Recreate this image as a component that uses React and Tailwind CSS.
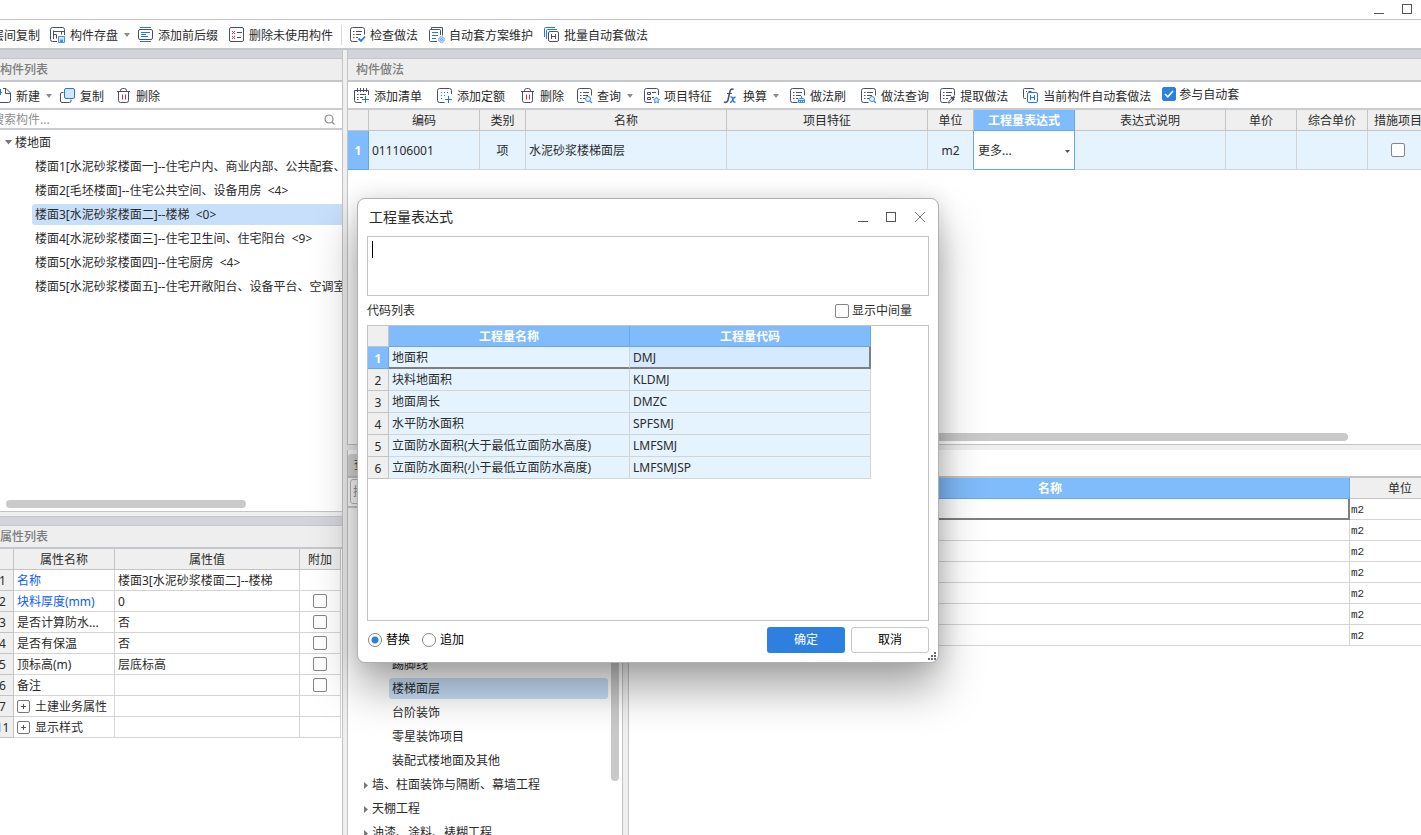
import React, { useState } from 'react';

const INK = '#4b5063';
const BLUE = '#1f7ae8';

const Svg = ({ children }) => (
  <svg width="16" height="16" viewBox="0 0 16 16" fill="none" stroke={INK} className="shrink-0" aria-hidden="true">
    {children}
  </svg>
);

// Sheet with dotted lines, open in the lower right corner
const Sheet = () => (
  <>
    <path d="M7.500 14.500h-5a2 2 0 0 1-2-2v-10a2 2 0 0 1 2-2h10a2 2 0 0 1 2 2v5" />
    <path d="M3 4.500h1.500M6 4.500h6M3 7.500h1.500M6 7.500h5M3 10.500h1.500M6 10.500h2" />
  </>
);

const SaveIcon = () => (
  <Svg>
    <path d="M7 14.500H2.500a2 2 0 0 1-2-2v-10a2 2 0 0 1 2-2h10a2 2 0 0 1 2 2V8" />
    <path d="M3.500 12V3.500M3.500 7.500h3v4M3.500 4.500h11M11.500 4.500v3" />
    <path d="M8.500 9.500h6v6h-6z" fill="#d6e8ff" stroke="#4a90e8" />
    <path d="M10 12.500h3V15h-3z" fill="#4a90e8" stroke="none" />
  </Svg>
);

const PrefixIcon = () => (
  <Svg>
    <path d="M2 .5h11M2 14.500h11" stroke={BLUE} />
    <rect x=".5" y="2.500" width="14" height="10" rx="1.500" />
    <path d="M3 5.500h9M3 7.500h5M3 9.500h7" stroke={BLUE} />
  </Svg>
);

const RemoveUnusedIcon = () => (
  <Svg>
    <rect x=".5" y=".5" width="14" height="14" rx="1.500" />
    <path d="M3 4l3 3M6 4L3 7M3 9l3 3M6 9l-3 3" stroke="#e02b3a" />
    <path d="M8 5.500h5M8 10.500h4" />
  </Svg>
);

const CheckSheetIcon = () => (
  <Svg>
    <Sheet />
    <path d="M8.500 11.500l2.500 2.500 4-4.500" stroke={BLUE} strokeWidth="1.800" />
  </Svg>
);

const SchemeIcon = () => (
  <Svg>
    <path d="M2.500 2.500v-2h11v8M8 14.500H1.500a1 1 0 0 1-1-1v-10a1 1 0 0 1 1-1h9a1 1 0 0 1 1 1V8" />
    <path d="M3 5.500h6M3 8.500h6M3 11.500h4" stroke={BLUE} />
    <circle cx="12.500" cy="12.500" r="3" fill="#b8d6fa" stroke="#6ba5ee" strokeDasharray="1.500 .8" />
    <circle cx="12.500" cy="12.500" r="1" stroke="#6ba5ee" />
  </Svg>
);

const BatchIcon = () => (
  <Svg>
    <path d="M.5 10V1.500a1 1 0 0 1 1-1H11M2.500 12V3.500a1 1 0 0 1 1-1H13" stroke={BLUE} />
    <rect x="4.500" y="4.500" width="10" height="10" rx="1.500" fill="#fff" />
    <path d="M7.500 7v5M11.500 7v5M7.500 9.500h4" />
  </Svg>
);

const NewIcon = () => (
  <Svg>
    <path d="M7 .5h3l4.500 4.500v7.500a2 2 0 0 1-2 2H2.500V8" />
    <path d="M9.500.5v5h5" />
    <path d="M1 4.500h5M4.500 1v6" stroke={BLUE} />
  </Svg>
);

const CopyIcon = () => (
  <Svg>
    <path d="M3.500 4.500H2A1.500 1.500 0 0 0 .5 6v7A1.500 1.500 0 0 0 2 14.500h7.500A1.500 1.500 0 0 0 11 13v-1.500" />
    <rect x="4.500" y=".5" width="10" height="10" rx="1.500" fill="#d3e6fd" stroke={BLUE} />
  </Svg>
);

const TrashIcon = () => (
  <Svg>
    <path d="M1 3.500h13M4.500 3.500v-1a2 2 0 0 1 2-2h2a2 2 0 0 1 2 2v1M2.500 3.500v9a2 2 0 0 0 2 2h6a2 2 0 0 0 2-2v-9" />
    <path d="M6.500 6.500v5M9.500 6.500v5" stroke="#e02b3a" />
  </Svg>
);

const AddListIcon = () => (
  <Svg>
    <path d="M7.500 14.500h-5a2 2 0 0 1-2-2v-10h14V7M3.500 0v4M6.500 0v4M9.500 0v4M12.500 0v4" />
    <path d="M3 6.500h1.500M6 6.500h6M3 9.500h1.500M6 9.500h3M3 11.500h1.500" />
    <path d="M11.500 8v7M8 11.500h7" stroke={BLUE} />
  </Svg>
);

const AddQuotaIcon = () => (
  <Svg>
    <path d="M7.500 14.500h-5a2 2 0 0 1-2-2v-10a2 2 0 0 1 2-2h10a2 2 0 0 1 2 2V6" />
    <path d="M4 4.500h8M4 7.500h5M4 10.500h3" stroke={BLUE} strokeDasharray="1 2" />
    <path d="M11.500 8v7M8 11.500h7" stroke={BLUE} />
  </Svg>
);

const QueryIcon = () => (
  <Svg>
    <Sheet />
    <circle cx="11" cy="11" r="2.500" fill="#e6f1ff" stroke="#3d8bea" />
    <path d="M13 13l2 2" stroke="#3d8bea" strokeWidth="1.500" />
  </Svg>
);

const FeatureIcon = () => (
  <Svg>
    <path d="M8 14.500H2.500a2 2 0 0 1-2-2v-10a2 2 0 0 1 2-2h10a2 2 0 0 1 2 2V7" />
    <path d="M3.500 4.500h3v2h-3zM3.500 9.500h3v2h-3zM8 4.500h4M8 9.500h2" />
    <path d="M12.500 9l1 2 2 .3-1.500 1.500.4 2.200-1.900-1-1.900 1 .4-2.200-1.500-1.500 2-.3z" fill="#d6e8ff" stroke="#4a90e8" />
  </Svg>
);

const FxIcon = () => (
  <Svg>
    <path d="M10.500 1.500C8.500.2 7.300 1.500 6.800 4L5 12c-.5 2-2 3-4 2" strokeWidth="1.600" />
    <path d="M4 5.500h5" />
    <path d="M7.500 9c2-.5 2 1 2.500 3s1 2.500 2.500 2M12.500 9c-1 0-2 1-3 3s-1.500 2.500-2.500 2" stroke={BLUE} strokeWidth="1.400" />
  </Svg>
);

const BrushIcon = () => (
  <Svg>
    <Sheet />
    <path d="M11.500 8v2.500M8.500 14.500v-3a1 1 0 0 1 1-1h4a1 1 0 0 1 1 1v3zM8.500 12.500h6M10.500 12.500v2M12.500 12.500v2" fill="#d6e8ff" stroke="#3d8bea" />
  </Svg>
);

const ExtractIcon = () => (
  <Svg>
    <Sheet />
    <path d="M8.500 15l.5-1.800 3-3 1.300 1.300-3 3z" fill="#fff" />
    <path d="M11 9l3 3M12.500 10.500L14.500 8.500" strokeWidth="1.800" />
  </Svg>
);

const CurrentIcon = () => (
  <Svg>
    <path d="M3 10.500H1.500a1 1 0 0 1-1-1v-8a1 1 0 0 1 1-1H10a1 1 0 0 1 1 1V2M3 3.500h1M5.500 3.500h3" />
    <rect x="4.500" y="4.500" width="10" height="10" rx="1.500" fill="#fff" stroke={BLUE} />
    <path d="M7.500 7v5M11.500 7v5M7.500 9.500h4" stroke={BLUE} />
  </Svg>
);

const Caret = () => (
  <svg width="6" height="4" viewBox="0 0 6 4" className="ml-0.5 shrink-0 fill-[#8c8c8c]" aria-hidden="true">
    <path d="M0 0h6L3 4z" />
  </svg>
);

const ToolButton = ({ icon: Icon, label, menu, className = '' }) => (
  <button type="button" className={`flex shrink-0 items-center gap-1 whitespace-nowrap ${className}`}>
    {Icon && <Icon />}
    <span className="pt-0.5">{label}</span>
    {menu && <Caret />}
  </button>
);

const box = 'block size-3.5 shrink-0 appearance-none rounded-[2px] border border-[#858585] bg-white';

const CheckBox = ({ id, label, checked = false }) => {
  const [on, setOn] = useState(checked);
  return (
    <span className="grid place-items-center">
      <input
        id={id}
        type="checkbox"
        aria-label={label}
        checked={on}
        onChange={() => setOn(!on)}
        className={`${box} col-start-1 row-start-1 checked:border-[#2d7fe0] checked:bg-[#2d7fe0]`}
      />
      {on && (
        <svg width="10" height="8" viewBox="0 0 10 8" fill="none" stroke="#fff" strokeWidth="1.600" className="pointer-events-none col-start-1 row-start-1">
          <path d="M1 4l2.800 2.800L9 1" />
        </svg>
      )}
    </span>
  );
};

const WindowButtons = ({ close }) => (
  <div className="flex items-center gap-[18px] pb-0.5">
    <button type="button" aria-label="最小化" className="flex h-[10px] w-[10px] items-end">
      <span className="h-px w-full bg-[#555]" />
    </button>
    <button type="button" aria-label="最大化" className="size-[10px] border border-[#555]" />
    {close && (
      <button type="button" aria-label="关闭">
        <svg width="12" height="12" viewBox="0 0 12 12" stroke="#777" fill="none">
          <path d="M1 1l10 10M11 1L1 11" />
        </svg>
      </button>
    )}
  </div>
);

const PanelTitle = ({ children }) => (
  <>
    <div className="h-2 shrink-0 bg-[#d2d4da]" />
    <h2 className="flex h-6 shrink-0 items-center border-t border-b-2 border-[#c4c7cb] bg-[#eee] px-2 font-medium text-[#7d7d7d]">
      {children}
    </h2>
  </>
);

const components = [
  '楼面1[水泥砂浆楼面一]--住宅户内、商业内部、公共配套、',
  '楼面2[毛坯楼面]--住宅公共空间、设备用房  <4>',
  '楼面3[水泥砂浆楼面二]--楼梯  <0>',
  '楼面4[水泥砂浆楼面三]--住宅卫生间、住宅阳台  <9>',
  '楼面5[水泥砂浆楼面四]--住宅厨房  <4>',
  '楼面5[水泥砂浆楼面五]--住宅开敞阳台、设备平台、空调室',
];

const properties = [
  { no: 1, name: '名称', value: '楼面3[水泥砂浆楼面二]--楼梯', key: true },
  { no: 2, name: '块料厚度(mm)', value: '0', key: true, extra: true },
  { no: 3, name: '是否计算防水...', value: '否', extra: true },
  { no: 4, name: '是否有保温', value: '否', extra: true },
  { no: 5, name: '顶标高(m)', value: '层底标高', extra: true },
  { no: 6, name: '备注', value: '', extra: true },
  { no: 7, name: '土建业务属性', group: true },
  { no: 11, name: '显示样式', group: true },
];

const codes = [
  ['地面积', 'DMJ'],
  ['块料地面积', 'KLDMJ'],
  ['地面周长', 'DMZC'],
  ['水平防水面积', 'SPFSMJ'],
  ['立面防水面积(大于最低立面防水高度)', 'LMFSMJ'],
  ['立面防水面积(小于最低立面防水高度)', 'LMFSMJSP'],
];

const chapters = ['踢脚线', '楼梯面层', '台阶装饰', '零星装饰项目', '装配式楼地面及其他'];
const sections = ['墙、柱面装饰与隔断、幕墙工程', '天棚工程', '油漆、涂料、裱糊工程'];

const table = 'table-fixed border-separate border-spacing-0';
const th = 'border-r border-b border-[#c4c4c4] bg-[#efefef] px-0 pt-0.5 pb-0 text-center font-normal whitespace-nowrap';
const thActive = 'border-r border-b border-[#68a8ea] bg-[#80bbfb] px-0 pt-0.5 pb-0 text-center font-bold text-white';
const cell = 'border-r border-b border-[#d4d4d4] whitespace-nowrap';
const td = `${cell} px-[3px] pt-0.5 pb-0`;
const tdBox = `${cell} p-0`;

const ComponentList = () => (
  <section className="flex h-[462px] shrink-0 flex-col border-b border-[#c4c4c4]">
    <PanelTitle>
      <span className="-ml-2">构件列表</span>
    </PanelTitle>
    <div className="-ml-1 flex h-[26px] shrink-0 items-center pt-0.5">
      <ToolButton icon={NewIcon} label="新建" menu className="mr-2" />
      <ToolButton icon={CopyIcon} label="复制" className="mr-3" />
      <ToolButton icon={TrashIcon} label="删除" />
    </div>
    <div className="-ml-2 flex h-[22px] shrink-0 items-center border-y-2 border-[#c9cbce] pr-[7px]">
      <input type="text" aria-label="搜索构件" placeholder="搜索构件..." className="min-w-0 flex-1 pt-0.5 outline-none placeholder:text-[#8f8f8f]" />
      <svg width="11" height="11" viewBox="0 0 11 11" fill="none" stroke="#8f8f8f" strokeWidth="1.200">
        <circle cx="5" cy="5" r="4" />
        <path d="M8 8l2.500 2.500" />
      </svg>
    </div>
    <div className="flex-1 overflow-hidden">
      <div className="flex h-6 items-center gap-[3px] pl-[5px]">
        <svg width="7" height="5" viewBox="0 0 7 5" className="fill-[#777]"><path d="M0 0h7L3.500 4.500z" /></svg>
        <span className="pt-0.5">楼地面</span>
      </div>
      <ul>
        {components.map((item, index) => (
          <li key={item} className="flex h-6 items-center pl-8">
            <span className={`h-[21px] flex-1 rounded-l-[3px] pl-[3px] leading-[21px] whitespace-pre ${index === 2 ? 'bg-[#c8dff9]' : ''}`}>
              {item}
            </span>
          </li>
        ))}
      </ul>
    </div>
    <div className="mb-[3px] ml-1.5 h-2 w-60 shrink-0 rounded-full bg-[#cacaca]" />
  </section>
);

const PropertyList = () => (
  <section className="flex flex-1 flex-col overflow-hidden border-t border-[#c4c7cb]">
    <PanelTitle>
      <span className="-ml-2">属性列表</span>
    </PanelTitle>
    <table className={`${table} -ml-2 w-[349px]`}>
      <colgroup>
        <col className="w-[22px]" />
        <col className="w-[101px]" />
        <col className="w-[185px]" />
        <col className="w-[41px]" />
      </colgroup>
      <thead>
        <tr className="h-[21px]">
          <th className={th} />
          <th className={th}>属性名称</th>
          <th className={th}>属性值</th>
          <th className={th}>附加</th>
        </tr>
      </thead>
      <tbody>
        {properties.map((row) => (
          <tr key={row.no} className="h-[21px]">
            <th className={th}>{row.no}</th>
            <td className={`${td} ${row.key ? 'text-[#0a5cff]' : ''}`}>
              {row.group ? (
                <span className="flex items-center gap-[5px]">
                  <button type="button" aria-label={`展开${row.name}`} className="mb-0.5 flex size-[13px] items-center justify-center rounded-[2px] border border-[#777]">
                    <svg width="5" height="5" viewBox="0 0 5 5" stroke="#555"><path d="M0 2.500h5M2.500 0v5" /></svg>
                  </button>
                  {row.name}
                </span>
              ) : row.name}
            </td>
            <td className={td}>{row.value}</td>
            <td className={tdBox}>{row.extra && <CheckBox label={`附加${row.name}`} />}</td>
          </tr>
        ))}
      </tbody>
    </table>
  </section>
);

const MethodTable = () => (
  <table className={`${table} w-[1081px]`}>
    <colgroup>
      <col className="w-[21px]" />
      <col className="w-[111px]" />
      <col className="w-[46px]" />
      <col className="w-[201px]" />
      <col className="w-[201px]" />
      <col className="w-[46px]" />
      <col className="w-[101px]" />
      <col className="w-[151px]" />
      <col className="w-[71px]" />
      <col className="w-[71px]" />
      <col className="w-[61px]" />
    </colgroup>
    <thead>
      <tr className="h-[21px]">
        <th className={th} />
        <th className={th}>编码</th>
        <th className={th}>类别</th>
        <th className={th}>名称</th>
        <th className={th}>项目特征</th>
        <th className={th}>单位</th>
        <th className={thActive}>工程量表达式</th>
        <th className={th}>表达式说明</th>
        <th className={th}>单价</th>
        <th className={th}>综合单价</th>
        <th className={th}>措施项目</th>
      </tr>
    </thead>
    <tbody>
      <tr className="h-[39px] bg-[#e5f3ff]">
        <th className={thActive}>1</th>
        <td className={td}>011106001</td>
        <td className={`${td} text-center`}>项</td>
        <td className={td}>水泥砂浆楼梯面层</td>
        <td className={td} />
        <td className="border-r border-b border-r-[#68a8ea] border-b-[#d4d4d4] px-0 pt-0.5 pb-0 text-center">m2</td>
        <td className="border-r border-b border-[#68a8ea] bg-white px-1 pt-0.5 pb-0">
          <span className="flex items-center">
            <select aria-label="工程量表达式" className="min-w-0 flex-1 appearance-none outline-none">
              <option>更多...</option>
            </select>
            <svg width="5" height="3" viewBox="0 0 5 3" className="fill-[#555]"><path d="M0 0h5L2.500 3z" /></svg>
          </span>
        </td>
        <td className={td} />
        <td className={td} />
        <td className={td} />
        <td className={tdBox}><CheckBox label="措施项目" /></td>
      </tr>
    </tbody>
  </table>
);

const MethodPanel = () => (
  <section className="flex h-[395px] shrink-0 flex-col overflow-hidden border-b border-l border-[#c4c4c4]">
    <PanelTitle>构件做法</PanelTitle>
    <div className="flex h-7 shrink-0 items-center border-b-2 border-[#c9cbce] pt-0.5 pl-1.5">
      <ToolButton icon={AddListIcon} label="添加清单" className="mr-[15px]" />
      <ToolButton icon={AddQuotaIcon} label="添加定额" className="mr-[15px]" />
      <ToolButton icon={TrashIcon} label="删除" className="mr-[13px]" />
      <ToolButton icon={QueryIcon} label="查询" menu className="mr-[11px]" />
      <ToolButton icon={FeatureIcon} label="项目特征" className="mr-[11px]" />
      <ToolButton icon={FxIcon} label="换算" menu className="mr-[11px]" />
      <ToolButton icon={BrushIcon} label="做法刷" className="mr-[15px]" />
      <ToolButton icon={QueryIcon} label="做法查询" className="mr-[11px]" />
      <ToolButton icon={ExtractIcon} label="提取做法" className="mr-[15px]" />
      <ToolButton icon={CurrentIcon} label="当前构件自动套做法" className="mr-[11px]" />
      <label htmlFor="auto" className="flex shrink-0 items-center gap-[3px] pb-1">
        <CheckBox id="auto" checked />
        <span className="pt-0.5">参与自动套</span>
      </label>
    </div>
    <div className="flex-1">
      <MethodTable />
    </div>
    <div className="mr-[73px] mb-[3px] ml-3 h-2 rounded-full bg-[#c9c9c9]" />
  </section>
);

const ChapterTree = () => (
  <div className="flex w-[275px] shrink-0 flex-col overflow-hidden border-r border-[#c4c4c4]">
    <div className="shrink-0 border-b-2 border-[#c9cbce] p-0.5 pt-px">
      <input type="text" aria-label="搜索" placeholder="搜索" className="block h-[25px] w-full rounded-[3px] border border-[#bbb] px-0.5 outline-none placeholder:text-[#8f8f8f]" />
    </div>
    <div className="flex min-h-0 flex-1">
      <ul className="flex-1 pt-36">
        {chapters.map((item, index) => (
          <li key={item} className="flex h-6 items-center pl-[41px]">
            <span className={`h-[21px] flex-1 rounded-[3px] pl-[3px] leading-[21px] ${index === 1 ? 'bg-[#c8dff9]' : ''}`}>{item}</span>
          </li>
        ))}
        {sections.map((item) => (
          <li key={item} className="flex h-6 items-center gap-1 pt-0.5 pl-4">
            <svg width="4" height="7" viewBox="0 0 4 7" className="fill-[#777]"><path d="M0 0l4 3.500L0 7z" /></svg>
            <span>{item}</span>
          </li>
        ))}
      </ul>
      <div className="mr-[3px] mb-[54px] ml-[3px] w-2 rounded-full bg-[#c9c9c9]" />
    </div>
  </div>
);

const QuotaTable = () => (
  <div className="min-w-0 flex-1 overflow-hidden border-l border-[#c4c4c4]">
    <table className={`${table} w-[822px]`}>
      <colgroup>
        <col className="w-[21px]" />
        <col className="w-[101px]" />
        <col className="w-[599px]" />
        <col className="w-[101px]" />
      </colgroup>
      <thead>
        <tr className="h-[21px]">
          <th className={th} />
          <th className={th} />
          <th className={thActive}>名称</th>
          <th className={th}>单位</th>
        </tr>
      </thead>
      <tbody>
        {[1, 2, 3, 4, 5, 6, 7].map((no) => (
          <tr key={no} className="h-[21px]">
            <th className={th} />
            <td className={td} />
            <td className={no === 1 ? 'border-r-2 border-b-2 border-[#7f7f7f]' : td} />
            <td className="border-b border-[#d4d4d4] px-px pt-0.5 pb-0 font-['Liberation_Mono',monospace] text-[11px] leading-4">m2</td>
          </tr>
        ))}
      </tbody>
    </table>
  </div>
);

const ExpressionDialog = () => {
  const [mode, setMode] = useState('replace');
  const radio = 'size-3.5 appearance-none rounded-full border border-[#858585] bg-white checked:bg-[radial-gradient(circle,#2d7fe0_3px,white_4px)]';

  return (
    <div
      role="dialog"
      aria-labelledby="dialog-title"
      className="absolute top-[198px] left-[357px] flex h-[465px] w-[582px] flex-col rounded-lg border border-[#b0b0b0] bg-white px-[9px] shadow-[0_26px_44px_rgba(0,0,0,0.34),0_0_20px_rgba(0,0,0,0.12)]"
    >
      <div className="flex h-[37px] shrink-0 items-center justify-between pr-[3px] pl-0.5">
        <h1 id="dialog-title" className="pb-0.5 text-sm">工程量表达式</h1>
        <WindowButtons close />
      </div>
      <div className="relative">
        <textarea aria-label="表达式" className="block h-[60px] w-full resize-none border border-[#c4c4c4] p-1 outline-none" />
        <span className="absolute top-[5px] left-[5px] h-[17px] w-px bg-black" />
      </div>
      <div className="flex h-[29px] items-center justify-between pr-[17px]">
        <span>代码列表</span>
        <label htmlFor="middle" className="flex items-center gap-[3px]">
          <CheckBox id="middle" />
          显示中间量
        </label>
      </div>
      <div className="flex-1 border border-[#c4c4c4]">
        <table className={`${table} w-[503px]`}>
          <colgroup>
            <col className="w-[21px]" />
            <col className="w-[241px]" />
            <col className="w-[241px]" />
          </colgroup>
          <thead>
            <tr className="h-[21px]">
              <th className={th} />
              <th className={thActive}>工程量名称</th>
              <th className={thActive}>工程量代码</th>
            </tr>
          </thead>
          <tbody>
            {codes.map(([name, code], index) => (
              <tr key={code} className="h-[22px] bg-[#e5f3ff]">
                <th className={index === 0 ? thActive : th}>{index + 1}</th>
                <td className={index === 0 ? 'border-r border-b-2 border-r-[#d4d4d4] border-b-[#7f7f7f] px-[3px] pt-0.5 pb-0' : `${cell} px-[3px] py-0`}>{name}</td>
                <td className={index === 0 ? 'border-r-2 border-b-2 border-[#7f7f7f] bg-[#d5eafe] px-[3px] pt-0.5 pb-0' : `${cell} px-[3px] py-0`}>{code}</td>
              </tr>
            ))}
          </tbody>
        </table>
      </div>
      <div className="flex h-[41px] shrink-0 items-center pb-1 text-black">
        <label className="mr-3 flex items-center gap-1 pl-px">
          <input type="radio" name="mode" checked={mode === 'replace'} onChange={() => setMode('replace')} className={radio} />
          替换
        </label>
        <label className="flex items-center gap-1">
          <input type="radio" name="mode" checked={mode === 'append'} onChange={() => setMode('append')} className={radio} />
          追加
        </label>
        <div className="ml-auto flex gap-1.5">
          <button type="button" className="h-[26px] w-[78px] rounded-[3px] bg-[#2d7fe0] text-white">确定</button>
          <button type="button" className="h-[26px] w-[78px] rounded-[3px] border border-[#c9c9c9] bg-white">取消</button>
        </div>
      </div>
      <svg width="8" height="8" viewBox="0 0 8 8" className="absolute right-0.5 bottom-0.5 fill-[#6b6b75]" aria-hidden="true">
        <path d="M6 0h2v2H6zM3 3h2v2H3zM6 3h2v2H6zM0 6h2v2H0zM3 6h2v2H3zM6 6h2v2H6z" />
      </svg>
    </div>
  );
};

const App = () => (
  <div className="relative flex h-screen flex-col overflow-hidden bg-white font-['Noto_Sans','Noto_Sans_CJK_SC',sans-serif] text-xs leading-4 text-[#2b2b2b]">
    {/* Title bar */}
    <header className="flex h-5 shrink-0 items-center justify-end border-b border-[#c4c4c4] pr-[9px]">
      <WindowButtons />
    </header>

    {/* Main toolbar */}
    <div className="-ml-2 flex h-[30px] shrink-0 items-center border-b-2 border-[#c4c7cb] pt-0.5">
      <ToolButton label="层间复制" className="mr-2.5" />
      <ToolButton icon={SaveIcon} label="构件存盘" menu className="mr-2" />
      <ToolButton icon={PrefixIcon} label="添加前后缀" className="mr-[11px]" />
      <ToolButton icon={RemoveUnusedIcon} label="删除未使用构件" className="mr-2" />
      <div className="mr-2 h-5 w-px bg-[#d9d9d9]" />
      <ToolButton icon={CheckSheetIcon} label="检查做法" className="mr-[11px]" />
      <ToolButton icon={SchemeIcon} label="自动套方案维护" className="mr-[11px]" />
      <ToolButton icon={BatchIcon} label="批量自动套做法" />
    </div>

    <main className="flex min-h-0 flex-1 bg-[#efefef]">
      <aside className="mr-1 flex w-[343px] shrink-0 flex-col gap-1 overflow-hidden border-r border-[#c4c4c4]">
        <div className="shrink-0 bg-white"><ComponentList /></div>
        <div className="flex min-h-0 flex-1 bg-white"><PropertyList /></div>
      </aside>

      <div className="flex min-w-0 flex-1 flex-col">
        <div className="shrink-0 bg-white"><MethodPanel /></div>
        <section className="mt-[5px] flex min-h-0 flex-1 flex-col border-l border-[#c4c4c4]">
          <div className="flex h-7 shrink-0 items-end border-b-2 border-[#c4c4c4] bg-white">
            <button type="button" className="h-[22px] rounded-t-[3px] bg-[#d9d9d9] px-1.5">查询</button>
          </div>
          <div className="flex min-h-0 flex-1 gap-[5px] *:bg-white">
            <ChapterTree />
            <QuotaTable />
          </div>
        </section>
      </div>
    </main>

    <ExpressionDialog />
  </div>
);

export default App;
